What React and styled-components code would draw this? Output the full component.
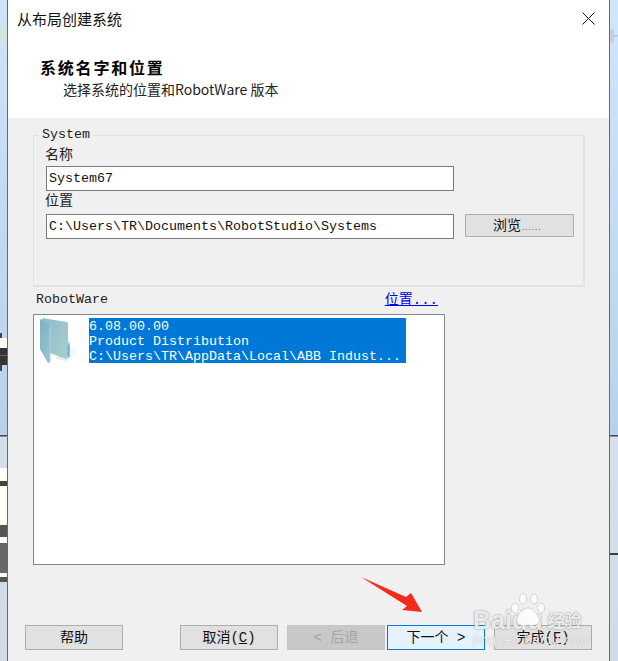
import React from "react";
import styled, { createGlobalStyle } from "styled-components";

const MONO = `"Liberation Mono", "Noto Sans CJK SC", monospace`;
const SANS = `"Noto Sans CJK SC", "Liberation Sans", sans-serif`;

const GlobalStyle = createGlobalStyle`
  html, body {
    margin: 0;
    padding: 0;
    background: #cfdff2;
  }
`;

const Page = styled.div`
  width: 618px;
  height: 661px;
  position: relative;
  overflow: hidden;
  display: grid;
  grid-template-columns: 7px 603px 8px;
`;

const Strip = styled.svg`
  display: block;
  width: 100%;
  height: 661px;
`;

const Dialog = styled.div`
  display: flex;
  flex-direction: column;
  height: 661px;
  box-sizing: border-box;
  border-left: 1px solid #5f6b78;
  border-right: 1px solid #5f6b78;
  background: #f0f0f0;
`;

const Header = styled.div`
  height: 118px;
  flex: none;
  background: #fff;
  position: relative;
  padding-left: 9px;
`;

const Title = styled.div`
  font: 15px/20px ${SANS};
  height: 20px;
  padding-top: 9px;
  color: #111;
`;

const Heading = styled.div`
  font: 700 16px/22px ${SANS};
  letter-spacing: 1.8px;
  margin: 27px 0 0 23px;
  color: #000;
`;

const Sub = styled.div`
  font: 14px/18px ${SANS};
  margin: 2px 0 0 46px;
  color: #222;
`;

const Close = styled.svg`
  position: absolute;
  top: 12px;
  right: 14px;
  width: 13px;
  height: 13px;
`;

const Body = styled.div`
  flex: 1;
  display: flex;
  flex-direction: column;
  padding: 9px 0 0 25px;
`;

const Group = styled.fieldset`
  margin: 0;
  padding: 0 0 0 12px;
  box-sizing: border-box;
  width: 552px;
  height: 160px;
  border: 2px solid #e2e2e2;
  border-width: 1px 2px 2px 1px;
`;

const Legend = styled.legend`
  font: 13.33px/16px ${MONO};
  margin-left: -7px;
  padding: 0 3px;
  color: #222;
`;

const Label = styled.div`
  font: 14px/${(p) => p.$lh}px ${MONO};
  height: ${(p) => p.$h}px;
  margin-left: -1px;
  color: #222;
`;

const Row = styled.div`
  display: flex;
  align-items: flex-start;
  gap: 11px;
`;

const Field = styled.div`
  width: 408px;
  height: 25px;
  box-sizing: border-box;
  border: 1px solid #7a7a7a;
  background: #fff;
  font: 13.33px/23px ${MONO};
  padding-left: 2px;
  color: #111;
  white-space: nowrap;
  overflow: hidden;
`;

const Button = styled.div`
  box-sizing: border-box;
  width: ${(p) => p.$w || 98}px;
  height: ${(p) => p.$h || 25}px;
  padding-right: ${(p) => p.$pr || 0}px;
  flex: none;
  border: 1px solid ${(p) => (p.$primary ? "#0078d7" : p.$off ? "#c6c6c6" : "#adadad")};
  background: ${(p) => (p.$primary ? "#e5f1fb" : p.$off ? "#c8c8c8" : "#e1e1e1")};
  color: ${(p) => (p.$off ? "#a4a4a4" : "#111")};
  font: 14px/${(p) => p.$h || 25}px ${MONO};
  text-align: center;
  white-space: pre;
`;

const Dots = styled.span`
  color: #8a6434;
  font-size: 8px;
  letter-spacing: -1.6px;
`;

const Key = styled.span`
  text-decoration: underline;
`;

const ListHead = styled.div`
  display: flex;
  justify-content: space-between;
  width: 402px;
  margin-left: 3px;
  height: 27px;
  font: 13.33px/26px ${MONO};
  color: #222;
`;

const Link = styled.span`
  color: #0000f0;
  text-decoration: underline;
  font-size: 14px;
`;

const ListBox = styled.div`
  box-sizing: border-box;
  width: 412px;
  height: 251px;
  flex: none;
  border: 1px solid #828790;
  background: #fff;
  display: flex;
  align-items: flex-start;
  padding: 3px 0 0 4px;
`;

const FolderIcon = styled.svg`
  width: 46px;
  height: 50px;
  flex: none;
  margin-right: 5px;
`;

const Selection = styled.div`
  box-sizing: border-box;
  background: #0078d7;
  color: #fff;
  width: 317px;
  height: 45px;
  padding-top: 1px;
  font: 13.33px/15px ${MONO};
  white-space: nowrap;
  overflow: hidden;
`;

const Footer = styled.div`
  display: flex;
  margin: 60px 0 0 -8px;
`;

const Gap = styled.div`
  width: ${(p) => p.$w}px;
  flex: none;
`;

const Arrow = styled.svg`
  position: absolute;
  left: 360px;
  top: 576px;
  width: 64px;
  height: 37px;
`;

const Watermark = styled.div`
  position: absolute;
  left: 473px;
  top: 608px;
  width: 145px;
  color: rgba(255, 255, 255, 0.82);
  pointer-events: none;
`;

const Brand = styled.div`
  font: 700 25px/24px "Liberation Sans", sans-serif;
  display: flex;
  align-items: center;
  white-space: nowrap;
  text-shadow: 0 0 2px rgba(130, 130, 130, 1);
`;

const BrandCn = styled.span`
  font: 700 17px/24px ${SANS};
  margin-left: 5px;
`;

const Domain = styled.div`
  font: 13px/14px "Liberation Sans", sans-serif;
  margin-top: 1px;
  letter-spacing: 0.8px;
  color: rgba(255, 255, 255, 0.85);
  text-shadow: 0 0 1px rgba(130, 130, 130, 0.7);
`;

const Paw = styled.svg`
  position: absolute;
  left: 37px;
  top: -15px;
  width: 36px;
  height: 36px;
`;

const LeftStrip = () => (
  <Strip viewBox="0 0 7 661" preserveAspectRatio="none">
    <defs>
      <linearGradient id="lg" x1="0" y1="0" x2="0" y2="1">
        <stop offset="0" stopColor="#cfe2fb" />
        <stop offset="0.657" stopColor="#b9d0ec" />
        <stop offset="0.658" stopColor="#d2dee9" />
        <stop offset="1" stopColor="#d0dbe6" />
      </linearGradient>
    </defs>
    <rect width="7" height="661" fill="url(#lg)" />
    <rect y="24" width="7" height="20" fill="#cfe3e0" opacity="0.8" />
    <rect y="333" width="2" height="6" fill="#444" />
    <rect y="338" width="7" height="10" fill="#fffff8" />
    <rect y="348" width="7" height="17" fill="#333" />
    <rect y="355" width="7" height="1" fill="#666" />
    <rect y="365" width="2" height="6" fill="#444" />
    <rect y="435" width="7" height="1.5" fill="#3c4650" />
    <rect y="468" width="7" height="113" fill="#fffff6" />
    <rect y="481" width="7" height="5" fill="#444" />
    <rect y="525" width="7" height="12" fill="#555" />
    <rect y="543" width="7" height="30" fill="#666" />
    <rect y="577" width="7" height="5" fill="#555" />
  </Strip>
);

const RightStrip = () => (
  <Strip viewBox="0 0 8 661" preserveAspectRatio="none">
    <defs>
      <linearGradient id="rg" x1="0" y1="0" x2="0" y2="1">
        <stop offset="0" stopColor="#d3e5fd" />
        <stop offset="0.657" stopColor="#b9d0ec" />
        <stop offset="0.658" stopColor="#d6e0ea" />
        <stop offset="1" stopColor="#d0dbe6" />
      </linearGradient>
    </defs>
    <rect width="8" height="661" fill="url(#rg)" />
    <rect y="29" width="4" height="14" rx="2" fill="#c9cfe0" />
    <rect y="35" x="3" width="5" height="1.5" fill="#b3c4f0" />
    <rect y="435" width="8" height="1.5" fill="#3c4650" />
    <rect y="553" width="8" height="2" fill="#3a3f44" />
  </Strip>
);

const Folder = () => (
  <FolderIcon viewBox="0 0 46 50">
    <defs>
      <linearGradient id="fb" x1="0" y1="0" x2="1" y2="1">
        <stop offset="0" stopColor="#8fbccb" />
        <stop offset="1" stopColor="#a8cfcb" />
      </linearGradient>
      <linearGradient id="ff" x1="0" y1="0" x2="0.6" y2="1">
        <stop offset="0" stopColor="#7db0c6" />
        <stop offset="1" stopColor="#94c3cd" />
      </linearGradient>
      <linearGradient id="fs" x1="0" y1="0" x2="1" y2="0">
        <stop offset="0" stopColor="#d8d8d8" />
        <stop offset="1" stopColor="#ffffff" />
      </linearGradient>
    </defs>
    <path d="M30 26 L42 34 L28 44 L18 40 Z" fill="url(#fs)" opacity="0.7" />
    <path d="M4 0 L29 4 Q30 4 30 6 L30 23 L32 26 L32 39 L28 41 L12 35 Z" fill="url(#fb)" />
    <path d="M2 1 L11 5 Q12 6 12 8 L12 44 L10 45 L3 33 Q2 32 2 30 Z" fill="url(#ff)" />
    <path d="M12 6 L12 44" stroke="#a9d0ea" strokeWidth="1" fill="none" />
    <path d="M30.5 27 L30.5 38" stroke="#6aa9d0" strokeWidth="1.5" fill="none" />
  </FolderIcon>
);

const App = () => (
  <Page>
    <GlobalStyle />
    <LeftStrip />
    <Dialog>
      <Header>
        <Title>从布局创建系统</Title>
        <Heading>系统名字和位置</Heading>
        <Sub>选择系统的位置和RobotWare 版本</Sub>
        <Close viewBox="0 0 13 13">
          <path d="M0.5 0.5 L12.5 12.5 M12.5 0.5 L0.5 12.5" stroke="#111" strokeWidth="1" fill="none" />
        </Close>
      </Header>
      <Body>
        <Group>
          <Legend>System</Legend>
          <Label $h={23} $lh={24}>名称</Label>
          <Field>System67</Field>
          <Label $h={23} $lh={20}>位置</Label>
          <Row>
            <Field>C:\Users\TR\Documents\RobotStudio\Systems</Field>
            <Button $w={109} $h={23} $pr={6}>
              浏览<Dots>......</Dots>
            </Button>
          </Row>
        </Group>
        <ListHead>
          <span>RobotWare</span>
          <Link>位置...</Link>
        </ListHead>
        <ListBox>
          <Folder />
          <Selection>
            6.08.00.00
            <br />
            Product Distribution
            <br />
            C:\Users\TR\AppData\Local\ABB Indust...
          </Selection>
        </ListBox>
        <Footer>
          <Button>帮助</Button>
          <Gap $w={57} />
          <Button>
            取消(<Key>C</Key>)
          </Button>
          <Gap $w={9} />
          <Button $off>{"< 后退"}</Button>
          <Gap $w={2} />
          <Button $primary>{"下一个 >"}</Button>
          <Gap $w={9} />
          <Button>
            完成(<Key>F</Key>)
          </Button>
        </Footer>
      </Body>
    </Dialog>
    <RightStrip />
    <Arrow viewBox="0 0 64 37">
      <path d="M1 1 L46 21 L51 17 L62 36 L42 34 L47 30 Z" fill="#f5291c" />
    </Arrow>
    <Watermark>
      <Paw viewBox="0 0 36 36">
        <g fill="rgba(255,255,255,0.85)" stroke="rgba(140,140,140,0.55)" strokeWidth="0.6">
          <ellipse cx="5" cy="15" rx="3.5" ry="5" />
          <ellipse cx="13" cy="6" rx="3.5" ry="5" />
          <ellipse cx="24" cy="6" rx="3.5" ry="5" />
          <ellipse cx="31" cy="15" rx="3.5" ry="5" />
          <path d="M18 15 C12 15 9 21 7 25 C5 31 11 34 18 32 C25 34 31 31 29 25 C27 21 24 15 18 15 Z" />
        </g>
      </Paw>
      <Brand>
        Baidu<BrandCn>经验</BrandCn>
      </Brand>
      <Domain>jingyan.baidu.com</Domain>
    </Watermark>
  </Page>
);

export default App;
